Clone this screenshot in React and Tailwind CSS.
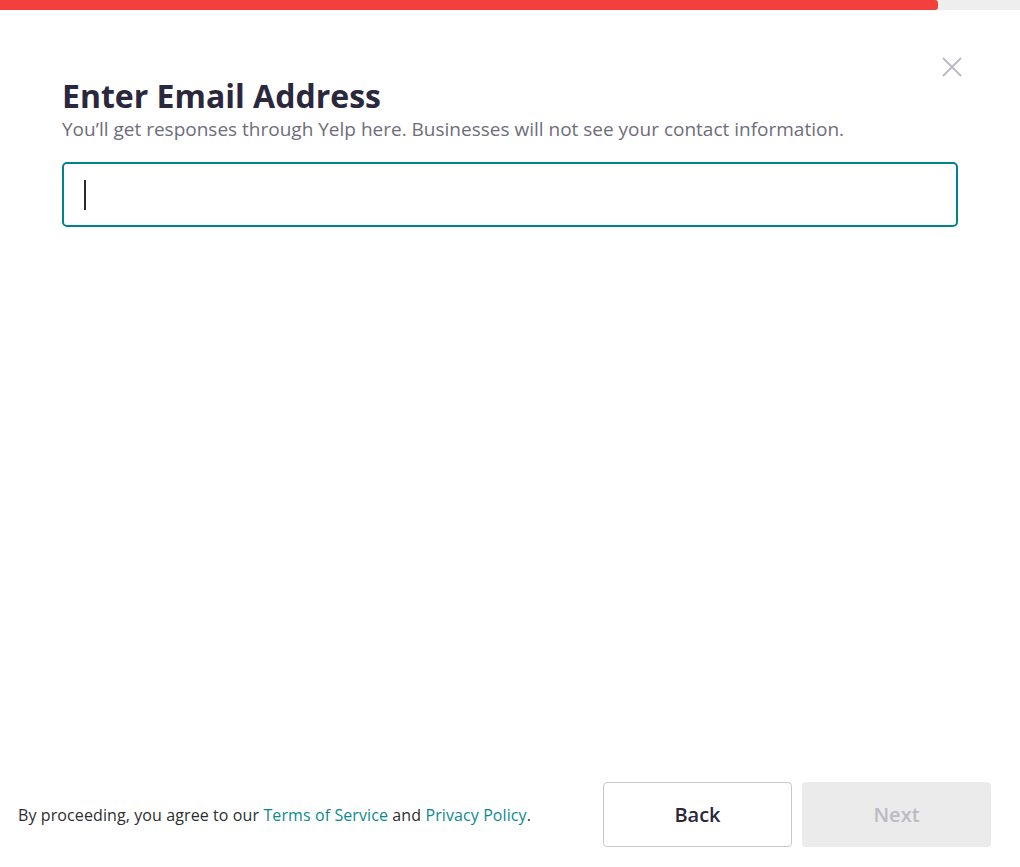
import { useState } from "react";

const font = { fontFamily: '"Open Sans", "Liberation Sans", sans-serif' };

function CloseIcon() {
  return (
    <svg width="20" height="20" viewBox="0 0 20 20" fill="none" stroke="#bbbbc4" strokeWidth="2">
      <path d="M1 1 L19 19 M19 1 L1 19" />
    </svg>
  );
}

export default function App() {
  const [email] = useState("");
  const progress = 92;

  return (
    <div className="flex h-[867px] w-full flex-col bg-white" style={font}>
      <div className="h-[10px] w-full bg-[#eeeeef]">
        <div className="h-full rounded-r-[3px] bg-[#f43f3f]" style={{ width: `${progress}%` }} />
      </div>

      <div className="relative px-[62px]">
        <button className="absolute right-[58px] top-[47px]" aria-label="Close">
          <CloseIcon />
        </button>
        <h1 className="mt-[66px] text-[32px] font-bold leading-[40px] text-[#2b273c]">
          Enter Email Address
        </h1>
        <p className="text-[19px] leading-[26px] text-[#6e6d7a]">
          You’ll get responses through Yelp here. Businesses will not see your contact information.
        </p>
        <div className="mt-[20px] flex h-[65px] items-center rounded-[5px] border-2 border-[#00838f] px-[20px]">
          <span className="text-[18px] text-[#2d2e2f]">{email}</span>
          <span className="h-[30px] w-[2px] bg-[#2b273c]" />
        </div>
      </div>

      <div className="mt-auto flex items-center justify-between pb-[20px] pl-[18px] pr-[29px]">
        <p className="text-[16px] tracking-[0.1px] text-[#2d2e2f]">
          By proceeding, you agree to our{" "}
          <a className="text-[#0b8a8f]">Terms of Service</a> and{" "}
          <a className="text-[#0b8a8f]">Privacy Policy</a>.
        </p>
        <div className="flex gap-[10px]">
          <button className="h-[65px] w-[189px] rounded-[4px] border border-[#c8c9ca] bg-white text-[20px] font-semibold text-[#2b273c]">
            Back
          </button>
          <button className="h-[65px] w-[189px] rounded-[4px] bg-[#ebebeb] text-[20px] font-semibold text-[#bbbbc4]" disabled>
            Next
          </button>
        </div>
      </div>
    </div>
  );
}
